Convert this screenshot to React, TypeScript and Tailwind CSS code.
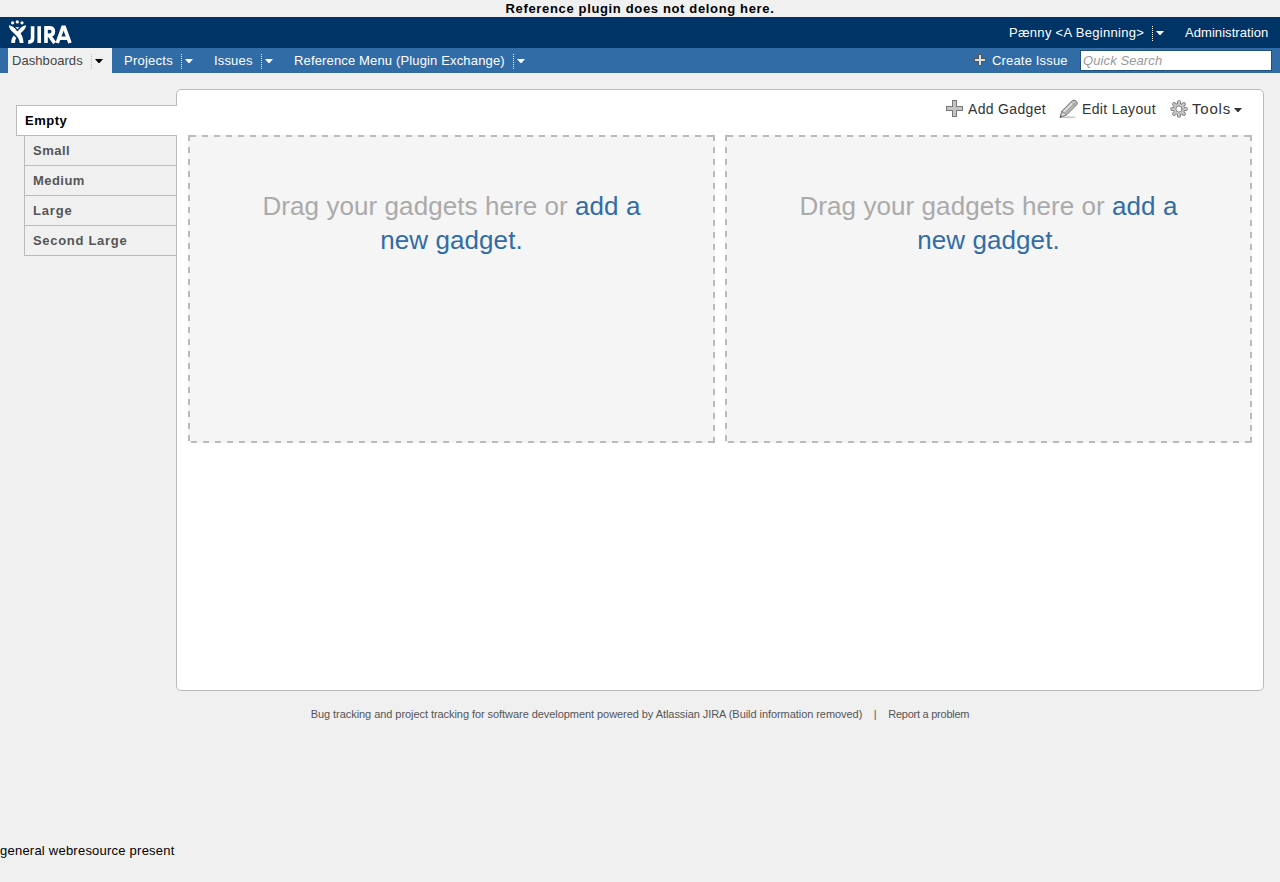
const TABS = [
  { name: 'Small', tracking: 'tracking-[0.5px]' },
  { name: 'Medium', tracking: 'tracking-[0.45px]' },
  { name: 'Large', tracking: 'tracking-[0.85px]' },
  { name: 'Second Large', tracking: 'tracking-[0.7px]' },
];

function Caret({ className = '' }: { className?: string }) {
  return (
    <svg className={className} width="8" height="4" viewBox="0 0 8 4" fill="currentColor">
      <path d="M0 0H8L4.5 4H3.5Z" />
    </svg>
  );
}

function Divider({ className = 'text-white' }: { className?: string }) {
  return (
    <svg className={`mt-[2px] ${className}`} width="1" height="15" viewBox="0 0 1 15" shapeRendering="crispEdges">
      <path d="M.5 0V15" stroke="currentColor" strokeDasharray="1 1" />
    </svg>
  );
}

function Logo() {
  return (
    <svg className="mb-px" width="64" height="24" viewBox="0 0 64 24" fill="none" stroke="#fff">
      <g fill="#fff" stroke="none">
        <circle cx="4.6" cy="2.8" r="1.6" />
        <circle cx="9.3" cy="1.9" r="1.6" />
        <circle cx="14" cy="2.8" r="1.6" />
        <path d="M.8 5.2C3.2 5.6 5.8 7 7 8.6L9.4 11.5L12.2 8.4C13.5 6.8 15.5 5.6 18.2 5.2C18 8.5 14.8 11.2 12.6 13.4C14.3 15.5 15.2 18 15.5 23H11.7C11.6 20.5 10.6 18 8.8 16.2L6.3 13.5C3.7 11.5 1 8.5 .8 5.2Z" />
        <path d="M5.8 15.5L8.3 18C7.4 19.3 7.2 21 7 23H3.2C3.2 20 4 17.3 5.8 15.5Z" />
        <path d="M7.3 7.2H11.5L9.4 9.3Z" />
      </g>
      <path d="M24.6 6.2V18.2Q24.6 22.1 20.2 22.1" strokeWidth="3.6" />
      <path d="M31.2 6.2V23" strokeWidth="3.6" />
      <path d="M38 23V7.9H41.2Q45.4 7.9 45.4 11.4Q45.4 15.3 41 15.3H38M41.2 15.3L46.6 23" strokeWidth="3.6" />
      <path d="M49.2 23L54.9 7.3H56.3L62 23M51.5 18.3H60.3" strokeWidth="3.6" />
    </svg>
  );
}

function PlusIcon() {
  return (
    <svg className="-mt-[2px]" width="17" height="17" viewBox="0 0 17 17" shapeRendering="crispEdges">
      <path d="M6 0H11V6H17V11H11V17H6V11H0V6H6Z" fill="#777" />
      <path d="M7 1H10V7H16V10H10V16H7V10H1V7H7Z" fill="#c4c4c4" />
    </svg>
  );
}

function SmallPlusIcon() {
  return (
    <svg className="-mt-px" width="12" height="12" viewBox="0 0 12 12" shapeRendering="crispEdges">
      <path d="M4 0H8V4H12V8H8V12H4V8H0V4H4Z" fill="#555" />
      <path d="M5 1H7V5H11V7H7V11H5V7H1V5H5Z" fill="#ddd" />
    </svg>
  );
}

function PencilIcon() {
  return (
    <svg width="20" height="20" viewBox="0 0 20 20">
      <ellipse cx="9" cy="18.3" rx="8" ry="1" fill="#ccc" />
      <path d="M1 18.4L3 11.8L13.2 1.7Q15 .2 17 2Q19.4 4 17.7 5.8L7.5 16L1 18.4Z" fill="#bbb" stroke="#777" strokeLinejoin="round" />
      <path d="M4 12.5L14 2.7L15.2 3.8L5.3 13.7Z" fill="#ddd" />
      <path d="M6 14.2L16 4.3M12.5 3L16.5 7" stroke="#888" strokeWidth=".7" />
      <path d="M3.2 12L4 14L6 14.2L7.2 16L1.3 18.2Z" fill="#ddd" stroke="#777" strokeWidth=".7" />
      <path d="M1 18.5L1.8 16.2L3.2 17.7Z" fill="#555" />
    </svg>
  );
}

function GearIcon() {
  return (
    <svg width="18" height="18" viewBox="0 0 18 18" fill="none" strokeLinecap="round">
      <path d="M9 2.2V15.8M2.2 9H15.8M4.1 4.1L13.9 13.9M13.9 4.1L4.1 13.9" stroke="#777" strokeWidth="4" />
      <circle cx="9" cy="9" r="6" fill="#777" />
      <path d="M9 2.2V15.8M2.2 9H15.8M4.1 4.1L13.9 13.9M13.9 4.1L4.1 13.9" stroke="#c8c8c8" strokeWidth="2.3" />
      <circle cx="9" cy="9" r="5.2" fill="#c8c8c8" />
      <circle cx="9" cy="9" r="3.1" fill="#fff" stroke="#777" strokeWidth=".9" />
    </svg>
  );
}

function MenuItem({ label, className }: { label: string; className: string }) {
  return (
    <div className={`flex h-full items-center ${className}`}>
      <span className="flex-1 whitespace-nowrap">{label}</span>
      <Divider />
      <Caret className="ml-[3px]" />
    </div>
  );
}

function DropZone() {
  return (
    <section className="flex h-[308px] flex-1 flex-col justify-between bg-[#f5f5f5]">
      <div className="h-[2px] bg-[repeating-linear-gradient(90deg,#bbb_0_6px,transparent_6px_12.023px)] bg-no-repeat bg-[position:2px_0]" />
      <div className="-my-[2px] flex h-[308px] justify-between">
        <div className="w-[2px] bg-[repeating-linear-gradient(180deg,#bbb_0_6px,transparent_6px_12px)]" />
        <p className="flex-1 pt-[54px] text-center text-[26px] leading-[34px] tracking-[0.07px] text-[#aaa]">
          Drag your gadgets here or{' '}
          <a className="text-[#326ca6]">
            add a<br />
            new gadget.
          </a>
        </p>
        <div className="w-[2px] bg-[repeating-linear-gradient(180deg,#bbb_0_6px,transparent_6px_12.08px)]" />
      </div>
      <div className="h-[2px] bg-[repeating-linear-gradient(90deg,#bbb_0_6px,transparent_6px_12.023px)] bg-no-repeat bg-[position:3px_0]" />
    </section>
  );
}

export default function App() {
  return (
    <div className="flex h-[882px] w-[1280px] flex-col overflow-hidden bg-[#f0f0f0] font-['Liberation_Sans',sans-serif] text-[13px] text-black">
      <div className="h-[17px] text-center leading-[17px] font-bold tracking-[0.65px]">Reference plugin does not delong here.</div>
      <header className="flex h-[31px] items-center justify-between bg-[#036] pr-3 pl-2 text-white">
        <Logo />
        <div className="flex items-center tracking-[0.3px]">
          <span className="w-[143px] whitespace-nowrap">Pænny &lt;A Beginning&gt;</span>
          <Divider />
          <Caret className="mr-[21px] ml-[3px]" />
          <span className="w-[83px] tracking-[0.06px] whitespace-nowrap">Administration</span>
        </div>
      </header>
      <nav className="flex h-[25px] items-center bg-[#326ca6] pr-2 pl-2 tracking-[0.17px] text-white">
        <div className="flex h-full w-[104px] items-center bg-[#f0f0f0] pl-1 text-[#444]">
          <span className="w-[79px] tracking-[0.06px]">Dashboards</span>
          <Divider className="text-[#bbb]" />
          <Caret className="ml-[3px] text-black" />
        </div>
        <MenuItem label="Projects" className="ml-3 w-[69px] tracking-[0.25px]" />
        <MenuItem label="Issues" className="ml-[21px] w-[59px]" />
        <MenuItem label="Reference Menu (Plugin Exchange)" className="ml-[21px] w-[231px] tracking-[0.15px]" />
        <div className="ml-auto flex items-center">
          <SmallPlusIcon />
          <span className="ml-[6px] w-[88px] whitespace-nowrap">Create Issue</span>
          <input
            aria-label="Quick Search"
            placeholder="Quick Search"
            className="h-[21px] w-[192px] border border-[#22517f] bg-white px-[2px] text-[13px] tracking-[0.1px] italic outline-none placeholder:text-[#999]"
          />
        </div>
      </nav>
      <main className="mt-4 flex h-[602px] pr-4 pl-4">
        <aside className="z-10 -mr-px w-[161px] pt-4 font-bold">
          <div className="h-[31px] border border-r-0 border-[#bbb] bg-white pl-2 leading-[29px] tracking-[0.5px]">Empty</div>
          {TABS.map((tab) => (
            <div
              key={tab.name}
              className={`ml-2 h-[30px] border-r border-b border-l border-[#bbb] pl-2 leading-[30px] text-[#555] ${tab.tracking}`}
            >
              {tab.name}
            </div>
          ))}
        </aside>
        <div className="flex flex-1 flex-col rounded-[5px] border border-[#bbb] bg-white px-[11px]">
          <div className="flex h-[45px] items-center justify-end pr-[10px] pb-[7px] text-[14px] tracking-[0.33px] text-[#333]">
            <PlusIcon />
            <span className="ml-[5px] w-[91px] whitespace-nowrap">Add Gadget</span>
            <PencilIcon />
            <span className="ml-[3px] w-[88px] tracking-[0.35px] whitespace-nowrap">Edit Layout</span>
            <GearIcon />
            <span className="ml-1 w-[42px] text-[15px] tracking-[0.8px] whitespace-nowrap">Tools</span>
            <Caret className="mt-px" />
          </div>
          <div className="flex gap-[10px]">
            <DropZone />
            <DropZone />
          </div>
        </div>
      </main>
      <footer className="mt-[14px] flex h-[18px] items-center justify-center text-[11px] tracking-[-0.06px] whitespace-nowrap text-[#555]">
        <span>Bug tracking and project tracking for software development powered by Atlassian JIRA (Build information removed)</span>
        <span className="w-[26px] text-center">|</span>
        <span className="tracking-[-0.25px]">Report a problem</span>
      </footer>
      <p className="mt-[119px] leading-[17px] tracking-[0.23px]">general webresource present</p>
    </div>
  );
}
